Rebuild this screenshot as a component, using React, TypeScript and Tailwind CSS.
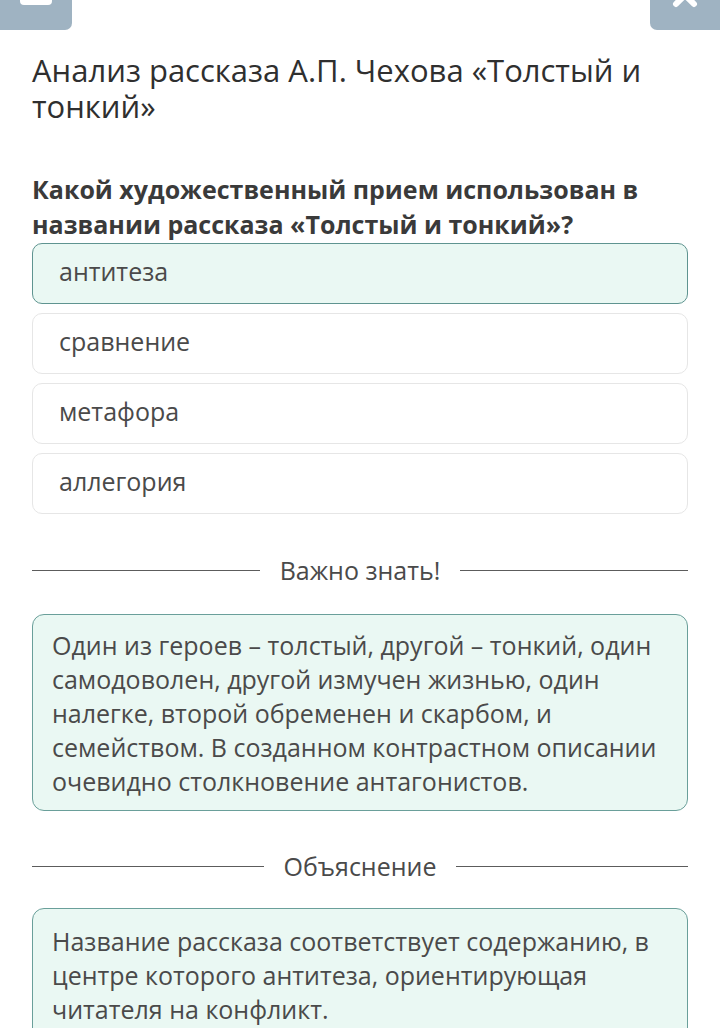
import React from 'react';

const options = ['антитеза', 'сравнение', 'метафора', 'аллегория'];

const Divider: React.FC<{ label: string }> = ({ label }) => (
    <div className="flex items-center gap-5">
        <div className="flex-1 h-px bg-[#5c5c5c]" />
        <span className="text-[25px] text-[#4a4a4a]">{label}</span>
        <div className="flex-1 h-px bg-[#5c5c5c]" />
    </div>
);

export default function App() {
    return (
        <div className="w-[720px] h-[1028px] overflow-hidden bg-white" style={{ fontFamily: '"Open Sans", "Noto Sans", sans-serif' }}>
            {/* top bar buttons */}
            <div className="flex justify-between h-[30px]">
                <div className="w-[72px] h-[30px] bg-[#9fb3c2] rounded-br-[7px] flex justify-center">
                    <div className="w-[32px] h-[5px] bg-white rounded-b-sm" />
                </div>
                <div className="w-[70px] h-[30px] bg-[#9fb3c2] rounded-bl-[7px] flex justify-center">
                    <svg width="30" height="12" viewBox="0 0 30 12">
                        <path d="M6 -14 L24 4 M24 -14 L6 4" stroke="white" strokeWidth="6" strokeLinecap="round" fill="none" />
                    </svg>
                </div>
            </div>

            <div className="px-[32px]">
                <h1 className="mt-[22px] text-[31px] leading-[36px] text-[#2f2f2f] font-normal">
                    Анализ рассказа А.П. Чехова «Толстый и тонкий»
                </h1>

                <h2 className="mt-[48px] text-[25px] leading-[35px] font-bold text-[#3a3a3a]">
                    Какой художественный прием использован в названии рассказа «Толстый и тонкий»?
                </h2>

                <div className="mt-[1px] flex flex-col gap-[9px]">
                    {options.map((o, i) => (
                        <div
                            key={o}
                            className={
                                i === 0
                                    ? 'h-[61px] rounded-[10px] border border-[#5f9490] bg-[#eaf8f3] flex items-center px-[26px]'
                                    : 'h-[61px] rounded-[10px] border border-[#e6e6e6] bg-white flex items-center px-[26px]'
                            }
                        >
                            <span className="text-[25px] text-[#4a4a4a] -mt-[3px]">{o}</span>
                        </div>
                    ))}
                </div>

                <div className="mt-[38px]">
                    <Divider label="Важно знать!" />
                </div>

                <div className="mt-[24px] rounded-[12px] border border-[#6a9f9a] bg-[#eaf8f3] px-[19px] pt-[13px] pb-[12px]">
                    <p className="text-[25px] leading-[34px] text-[#4a4a4a]">
                        Один из героев – толстый, другой – тонкий, один самодоволен, другой измучен жизнью, один налегке, второй обременен и скарбом, и семейством. В созданном контрастном описании очевидно столкновение антагонистов.
                    </p>
                </div>

                <div className="mt-[37px]">
                    <Divider label="Объяснение" />
                </div>

                <div className="mt-[23px] rounded-t-[12px] border border-[#6a9f9a] bg-[#eaf8f3] px-[19px] pt-[15px] pb-[20px]">
                    <p className="text-[25px] leading-[34px] text-[#4a4a4a]">
                        Название рассказа соответствует содержанию, в центре которого антитеза, ориентирующая читателя на конфликт.
                    </p>
                </div>
            </div>
        </div>
    );
}
